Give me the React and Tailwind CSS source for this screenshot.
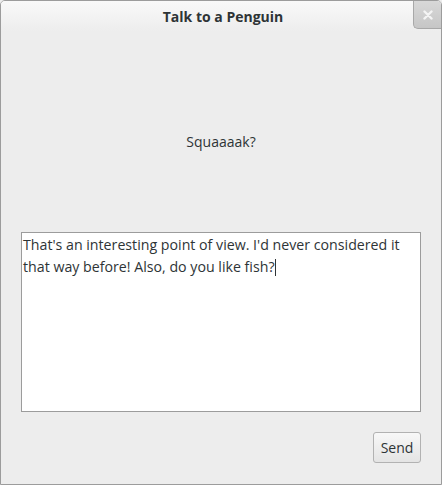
export default function App() {
  const font = { fontFamily: '"Open Sans", "DejaVu Sans", sans-serif' };
  return (
    <div className="w-[442px] h-[485px] bg-[#ededed]" style={font}>
      <div className="w-full h-full flex flex-col border border-[#9c9c9c] rounded-t-[5px] overflow-hidden bg-[#ededed]">
        <div className="relative h-[30px] shrink-0 bg-gradient-to-b from-[#f9f9f9] to-[#ededed] flex items-center justify-center pl-[4px]">
          <span className="text-[14px] font-bold text-[#2e3436]">Talk to a Penguin</span>
          <div className="absolute right-0 top-0 w-[28px] h-[28px] bg-gradient-to-b from-[#d8d8d8] to-[#c6c6c6] border-l border-b border-[#a8a8a8] rounded-bl-[5px] flex items-center justify-center">
            <svg width="10" height="10" viewBox="0 0 10 10">
              <path d="M1.5 1.5 L8.5 8.5 M8.5 1.5 L1.5 8.5" stroke="#f4f4f4" strokeWidth="2.4" strokeLinecap="round" />
            </svg>
          </div>
        </div>
        <div className="flex-1 flex flex-col px-[20px]">
          <div className="h-[201px] flex items-center justify-center">
            <span className="text-[14px] text-[#2e3436] mt-[20px]">Squaaaak?</span>
          </div>
          <div className="h-[180px] bg-white border border-[#9c9c9c] px-[1px] pt-[1px]">
            <p className="text-[14.2px] leading-[22px] text-[#2e3436]">
              That's an interesting point of view. I'd never considered it that way before! Also, do you like fish?<span className="inline-block w-[1px] h-[17px] bg-[#2e3436] align-middle -mt-[2px]"></span>
            </p>
          </div>
          <div className="flex justify-end mt-[20px]">
            <button className="w-[48px] h-[31px] rounded-[3px] border border-[#b2b2b2] bg-gradient-to-b from-[#f8f8f8] to-[#e4e4e4] text-[14px] text-[#2e3436]">Send</button>
          </div>
        </div>
      </div>
    </div>
  );
}
